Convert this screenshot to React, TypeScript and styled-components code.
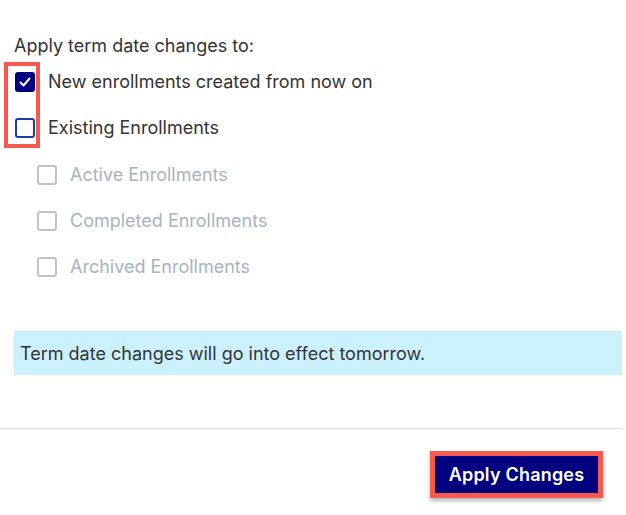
import React from "react";
import styled, { createGlobalStyle } from "styled-components";

const Global = createGlobalStyle`
  html, body { margin: 0; padding: 0; background: #ffffff; }
  body { font-family: Inter, "Noto Sans", sans-serif; color: #333333; }
`;

const RED = "#f65a4e";
const NAVY = "#020180";

const Page = styled.div`
  width: 626px;
  height: 515px;
  overflow: hidden;
  background: #fff;
`;

const Content = styled.div`
  padding: 34px 4px 0 14px;
`;

const Heading = styled.div`
  font-size: 18px;
  line-height: 24px;
  color: #333333;
`;

const HighlightGroup = styled.div`
  display: flex;
  margin: 4px 0 0 -10px;
`;

const CheckColumn = styled.div`
  display: flex;
  flex-direction: column;
  gap: 26px;
  padding: 6px 1px 6px 7px;
  border: 4px solid ${RED};
`;

const LabelColumn = styled.div`
  display: flex;
  flex-direction: column;
  gap: 22px;
  padding: 8px 0 0 8px;
`;

const Box = styled.span<{ $state: "checked" | "empty" | "disabled" }>`
  box-sizing: border-box;
  display: inline-flex;
  align-items: center;
  justify-content: center;
  width: 20px;
  height: 20px;
  border-radius: 3px;
  flex: none;
  background: ${(p) => (p.$state === "checked" ? NAVY : "#fff")};
  border: 2px solid
    ${(p) =>
      p.$state === "checked" ? NAVY : p.$state === "empty" ? "#1d3d9e" : "#c2c2c2"};
`;

const Label = styled.span<{ $disabled?: boolean }>`
  font-size: 18px;
  line-height: 24px;
  color: ${(p) => (p.$disabled ? "#a8b3bf" : "#333333")};
`;

const SubList = styled.div`
  display: flex;
  flex-direction: column;
  margin: 4px 0 0 23px;
`;

const SubRow = styled.label`
  display: flex;
  align-items: center;
  gap: 13px;
  height: 46px;
`;

const Info = styled.div`
  margin-top: 41px;
  height: 44px;
  display: flex;
  align-items: center;
  padding: 0 6px;
  background: #ccf1fe;
  font-size: 18px;
  color: #333333;
`;

const Divider = styled.hr`
  margin: 53px 0 0 0;
  width: 622px;
  border: none;
  border-top: 1px solid #dddbe6;
  height: 0;
`;

const Footer = styled.div`
  display: flex;
  justify-content: flex-end;
  padding: 22px 23px 0 0;
`;

const ApplyButton = styled.button`
  box-sizing: border-box;
  width: 173px;
  height: 47px;
  padding: 0;
  border: 5px solid ${RED};
  background: ${NAVY};
  color: #ffffff;
  font-family: Inter, "Noto Sans", sans-serif;
  font-size: 18px;
  font-weight: 600;
  letter-spacing: 0.2px;
  box-shadow: 0 3px 4px rgba(0, 0, 0, 0.28);
  cursor: pointer;
`;

const Check = () => (
  <svg width="14" height="14" viewBox="0 0 14 14">
    <polyline
      points="2.5,7.5 5.5,10.5 11.5,3.5"
      fill="none"
      stroke="#fff"
      strokeWidth="2"
      strokeLinecap="round"
      strokeLinejoin="round"
    />
  </svg>
);

const subItems = ["Active Enrollments", "Completed Enrollments", "Archived Enrollments"];

export default function App() {
  return (
    <Page>
      <Global />
      <Content>
        <Heading>Apply term date changes to:</Heading>
        <HighlightGroup>
          <CheckColumn>
            <Box $state="checked">
              <Check />
            </Box>
            <Box $state="empty" />
          </CheckColumn>
          <LabelColumn>
            <Label>New enrollments created from now on</Label>
            <Label>Existing Enrollments</Label>
          </LabelColumn>
        </HighlightGroup>
        <SubList>
          {subItems.map((s) => (
            <SubRow key={s}>
              <Box $state="disabled" />
              <Label $disabled>{s}</Label>
            </SubRow>
          ))}
        </SubList>
        <Info>Term date changes will go into effect tomorrow.</Info>
      </Content>
      <Divider />
      <Footer>
        <ApplyButton>Apply Changes</ApplyButton>
      </Footer>
    </Page>
  );
}
